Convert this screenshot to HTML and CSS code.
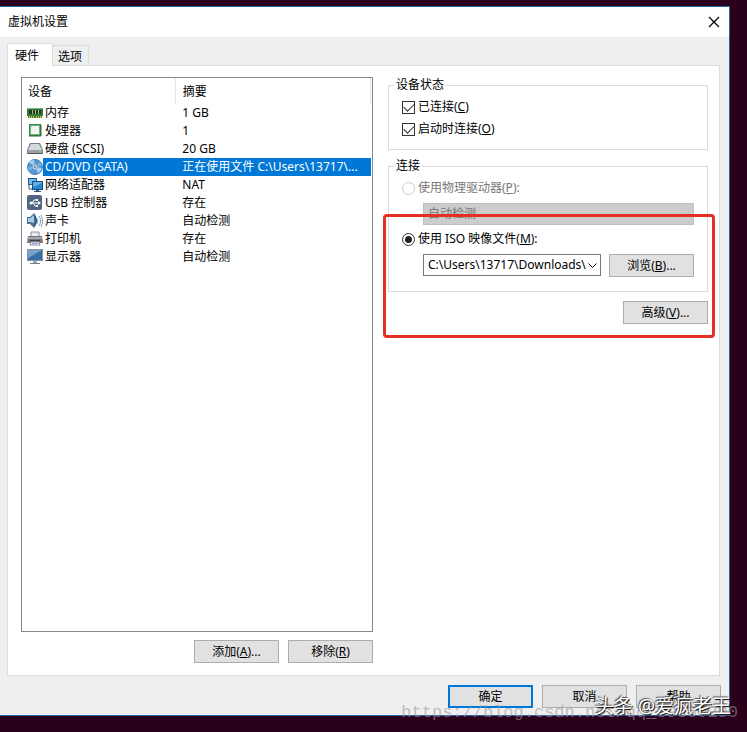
FILE: index.html
```html
<!DOCTYPE html>
<html lang="zh-CN">

<head>
    <meta charset="UTF-8">
    <meta name="viewport" content="width=device-width, initial-scale=1.0">
    <title>虚拟机设置</title>
    <link rel="stylesheet" href="styles.css">
</head>

<body>
    <main class="dialog">
        <header class="titlebar">
            <h1>虚拟机设置</h1>
            <button class="close" type="button" aria-label="关闭">
                <svg width="12" height="12" viewBox="0 0 12 12"><path d="M1 1l10 10M11 1L1 11" stroke="#000" stroke-width="1.2" fill="none"/></svg>
            </button>
        </header>

        <nav class="tabs">
            <button class="tab active" type="button">硬件</button>
            <button class="tab" type="button">选项</button>
        </nav>

        <div class="panel">
            <section class="hardware">
                <div class="list">
                    <table>
                        <thead>
                            <tr><th class="name">设备</th><th>摘要</th></tr>
                        </thead>
                        <tbody>
                            <tr>
                                <td><div class="device">
                                    <svg viewBox="0 0 16 16"><path d="M0 3h16v8h-1v2H1v-2H0z" fill="#2f7d3c"/><path d="M0 3h16v1H0z" fill="#7db183"/><path d="M2 5h3v4H2zM6 5h2v4H6zM9 5h2v4H9zM12 5h2v4h-2z" fill="#23372a"/><path d="M5 5h1v4H5zM8 5h1v4H8zM11 5h1v4h-1z" fill="#a9c65b"/><path d="M2 11h1v2H2zM4 11h1v2H4zM6 11h1v2H6zM9 11h1v2H9zM11 11h1v2h-1zM13 11h1v2h-1z" fill="#e1bd45"/></svg>
                                    <span>内存</span></div></td>
                                <td>1 GB</td>
                            </tr>
                            <tr>
                                <td><div class="device">
                                    <svg viewBox="0 0 16 16"><path d="M2 1h12v12H2z" fill="#2f8b48"/><path d="M3 2h10v10H3z" fill="#73b184"/><path d="M5 3h7v8H4V4z" fill="#f1f5f0"/><path d="M2 13h12V2" stroke="#246b37" fill="none"/></svg>
                                    <span>处理器</span></div></td>
                                <td>1</td>
                            </tr>
                            <tr>
                                <td><div class="device">
                                    <svg viewBox="0 0 16 16"><path d="M3 2h10l3 7v4H0V9z" fill="#777d86"/><path d="M4 3h8l3 6H1z" fill="#d5d8df"/><path d="M1 9h14v3H1z" fill="#9ba0a9"/><path d="M1 12h14v1H1z" fill="#50555b"/><path d="M12 10h2v1h-2z" fill="#77df57"/></svg>
                                    <span>硬盘 (SCSI)</span></div></td>
                                <td>20 GB</td>
                            </tr>
                            <tr class="selected">
                                <td><div class="device">
                                    <svg viewBox="0 0 16 16"><circle cx="8" cy="8" r="7.5" fill="#5795ce" stroke="#3f7fba"/><path d="M8 8L2 3a8 8 0 0 1 5-2zM8 8l7 1a7 7 0 0 1-4 5z" fill="#a8d1ef"/><path d="M8 8l5-5 2 4zM8 8l-6 4-1-4z" fill="#76b3df"/><circle cx="8" cy="8" r="2.5" fill="#d9eaf7" stroke="#6a9fca"/><circle cx="8" cy="8" r="1" fill="#477b9f"/></svg>
                                    <span>CD/DVD (SATA)</span></div></td>
                                <td>正在使用文件 C:\Users\13717\...</td>
                            </tr>
                            <tr>
                                <td><div class="device">
                                    <svg viewBox="0 0 16 16"><path d="M1 1h9v7H1z" fill="#1b598f"/><path d="M2 2h7v5H2z" fill="#7db9e7"/><path d="M5 4h11v9H5z" fill="#0c4f89"/><path d="M6 5h9v7H6z" fill="#65afe5"/><path d="M6 10l9-4v6H6z" fill="#2887c9"/><path d="M9 13h3v1h2v1H7v-1h2z" fill="#345b78"/><path d="M2 8v4h3" fill="none" stroke="#345b78"/></svg>
                                    <span>网络适配器</span></div></td>
                                <td>NAT</td>
                            </tr>
                            <tr>
                                <td><div class="device">
                                    <svg viewBox="0 0 16 16"><rect x="0" y="0" width="15" height="15" rx="2" fill="#51677f"/><path d="M3 8h9M5 8l2-3h3M6 8l2 3h2" stroke="#fff" fill="none"/><path d="M11 6l3 2-3 2zM9 4h2v2H9zM9 10h2v2H9z" fill="#fff"/><circle cx="4" cy="8" r="1.5" fill="#fff"/></svg>
                                    <span>USB 控制器</span></div></td>
                                <td>存在</td>
                            </tr>
                            <tr>
                                <td><div class="device">
                                    <svg viewBox="0 0 16 16"><path d="M0 4h3l4-4c3 3 3 12 0 15l-4-4H0C-1 9-1 6 0 4z" fill="#4a789b"/><path d="M1 5h3l3-4v9L4 9H1z" fill="#a8cce1"/><path d="M7 2c3 3 3 8 0 11" stroke="#214f75" stroke-width="1.5" fill="none"/><path d="M10 5c1 2 1 4 0 6M12 3c2 3 2 7 0 10M14 2c2 4 2 8 0 12" stroke="#739ebd" fill="none"/></svg>
                                    <span>声卡</span></div></td>
                                <td>自动检测</td>
                            </tr>
                            <tr>
                                <td><div class="device">
                                    <svg viewBox="0 0 16 16"><path d="M4 1h8v6H4z" fill="#e9edf3" stroke="#8c8b97"/><path d="M1 5h14l1 7H0z" fill="#77727f"/><path d="M1 6h14v2H1z" fill="#aaa6b0"/><path d="M3 9h10v1H3z" fill="#3e3b43"/><path d="M4 11h8l1 3H3z" fill="#f5f8ff" stroke="#8d8aa0"/><path d="M5 12h6v1H5z" fill="#9aa9d6"/></svg>
                                    <span>打印机</span></div></td>
                                <td>存在</td>
                            </tr>
                            <tr>
                                <td><div class="device">
                                    <svg viewBox="0 0 16 16"><path d="M0 0h16v12H0z" fill="#8796a5"/><path d="M1 1h14v10H1z" fill="#3b6ea2"/><path d="M1 1h14L1 9z" fill="#78a1c8"/><path d="M6 12h4v2H6z" fill="#9eabb6"/><path d="M3 14h10v1H3z" fill="#71818f"/></svg>
                                    <span>显示器</span></div></td>
                                <td>自动检测</td>
                            </tr>
                        </tbody>
                    </table>
                </div>
                <div class="actions">
                    <button class="btn" type="button">添加(<u>A</u>)...</button>
                    <button class="btn" type="button">移除(<u>R</u>)</button>
                </div>
            </section>

            <form class="settings">
                <fieldset>
                    <legend>设备状态</legend>
                    <label class="option"><input type="checkbox" checked><span>已连接(<u>C</u>)</span></label>
                    <label class="option"><input type="checkbox" checked><span>启动时连接(<u>O</u>)</span></label>
                </fieldset>
                <fieldset class="connection">
                    <legend>连接</legend>
                    <label class="option disabled"><input type="radio" name="source" disabled><span>使用物理驱动器(<u>P</u>):</span></label>
                    <div class="source">
                        <div class="combo disabled">
                            <select aria-label="物理驱动器" disabled><option>自动检测</option></select>
                            <svg width="9" height="6" viewBox="0 0 9 6"><path d="M.5 .5l4 4 4-4" stroke="currentColor" fill="none"/></svg>
                        </div>
                    </div>
                    <label class="option"><input type="radio" name="source" checked><span>使用 ISO 映像文件(<u>M</u>):</span></label>
                    <div class="source">
                        <div class="combo">
                            <select aria-label="ISO 映像文件"><option>C:\Users\13717\Downloads\</option></select>
                            <svg width="9" height="6" viewBox="0 0 9 6"><path d="M.5 .5l4 4 4-4" stroke="currentColor" fill="none"/></svg>
                        </div>
                        <button class="btn" type="button">浏览(<u>B</u>)...</button>
                    </div>
                </fieldset>
                <div class="actions">
                    <button class="btn" type="button">高级(<u>V</u>)...</button>
                </div>
                <div class="highlight"></div>
            </form>
        </div>

        <footer class="actions">
            <button class="btn default" type="button">确定</button>
            <button class="btn" type="button">取消</button>
            <button class="btn" type="button">帮助</button>
        </footer>
    </main>

    <div class="watermark url">https://blog.csdn.net/qq_39380290</div>
    <div class="watermark author">头条 @爱疯老王</div>
</body>

</html>
```
FILE: styles.css
```css
:root {
    --face: #efefef;
    --line: #dcdcdc;
    --accent: #0078d7;
}
* {
    box-sizing: border-box;
}
body {
    position: relative;
    min-height: 100vh;
    margin: 0;
    padding: 6px 17px 16px 0;
    background: #2b001b;
    color: #000;
    font: 12px/16px "Noto Sans", "Noto Sans CJK SC", sans-serif;
}
button,
select,
input {
    margin: 0;
    font: inherit;
    color: inherit;
}
.dialog {
    display: flex;
    flex-direction: column;
    min-height: calc(100vh - 22px);
    background: var(--face);
    border: 1px solid #2a62a8;
    border-left: 0;
}
.titlebar {
    display: flex;
    justify-content: space-between;
    align-items: center;
    height: 30px;
    padding: 0 9px 0 8px;
    background: #fff;
}
.titlebar h1 {
    margin: 0;
    font-size: 12px;
    font-weight: 400;
}
.close {
    display: flex;
    padding: 0;
    border: 0;
    background: none;
}

/* tabs */
.tabs {
    display: flex;
    align-items: flex-end;
    padding: 6px 7px 0;
}
.tab {
    height: 20px;
    padding: 2px 6px 0 5px;
    border: 1px solid var(--line);
    border-left: 0;
    border-bottom: 0;
    background: var(--face);
}
.tab.active {
    position: relative;
    height: 23px;
    margin-bottom: -1px;
    padding: 1px 13px 0 7px;
    border-left: 1px solid var(--line);
    background: #fff;
}

.panel {
    flex: 1;
    display: grid;
    grid-template-columns: 11fr 10fr;
    gap: 15px;
    margin: 0 9px 0 7px;
    padding: 11px 11px 12px 13px;
    border: 1px solid var(--line);
    background: #fff;
}

/* device list */
.hardware {
    display: flex;
    flex-direction: column;
    gap: 8px;
}
.list {
    flex: 1;
    padding-right: 1px;
    border: 1px solid #828790;
}
table {
    width: 100%;
    table-layout: fixed;
    border-collapse: collapse;
}
th {
    height: 26px;
    padding: 2px 6px 0;
    border-right: 1px solid #e5e5e5;
    font-weight: 400;
    text-align: left;
}
th.name {
    width: 44%;
}
td {
    height: 18px;
    padding: 0 0 0 7px;
    white-space: nowrap;
}
th:last-child {
    padding-left: 7px;
}
td:first-child {
    padding-left: 5px;
}
.device {
    display: flex;
    align-items: center;
}
.device svg {
    flex: none;
    width: 16px;
    height: 16px;
}
.device span {
    flex: 1;
    padding-left: 2px;
    line-height: 18px;
}
.selected span,
.selected td:last-child {
    background: var(--accent);
    color: #fff;
}

/* buttons */
.actions {
    display: flex;
    justify-content: flex-end;
    gap: 9px;
}
footer.actions {
    padding: 9px 8px 7px;
}
.btn {
    flex: none;
    width: 85px;
    height: 23px;
    padding: 0;
    border: 1px solid #adadad;
    background: #e1e1e1;
}
.btn.default {
    border: 2px solid var(--accent);
}

/* settings */
.settings {
    position: relative;
}
fieldset {
    min-width: 0;
    margin: 0 0 8px;
    padding: 3px 13px 9px;
    border: 1px solid var(--line);
}
legend {
    margin-left: -8px;
    padding: 0 2px;
}
.option {
    display: flex;
    align-items: center;
    gap: 3px;
    height: 22px;
}
.option input {
    appearance: none;
    display: grid;
    place-items: center;
    width: 13px;
    height: 13px;
    border: 1px solid #333;
    background: #fff;
}
.option input[type="radio"] {
    border-radius: 50%;
}
.option input[type="checkbox"]:checked::before {
    content: "";
    width: 9px;
    height: 5px;
    margin-top: -3px;
    border: solid #333;
    border-width: 0 0 1px 1px;
    transform: rotate(-45deg);
}
.option input[type="radio"]:checked::before {
    content: "";
    width: 7px;
    height: 7px;
    border-radius: 50%;
    background: #222;
}
.option.disabled {
    color: #777;
}
.option input:disabled {
    border-color: #ccc;
}
.connection {
    margin-bottom: 9px;
    padding-bottom: 14px;
}
.source {
    display: flex;
    gap: 8px;
    margin: 4px 0 3px 21px;
}
.source:last-child {
    margin-bottom: 0;
}
.combo {
    position: relative;
    flex: 1;
    min-width: 0;
}
.combo select {
    appearance: none;
    display: block;
    width: 100%;
    height: 22px;
    padding: 0 14px 0 4px;
    border: 1px solid #777;
    border-radius: 0;
    background: #fff;
}
.combo svg {
    position: absolute;
    top: 9px;
    right: 4px;
    pointer-events: none;
}
.combo.disabled {
    color: #777;
}
.combo.disabled select {
    border-color: #bfbfbf;
    background: #ccc;
    opacity: 1;
}
.combo.disabled svg {
    color: #b5b5b5;
}
.highlight {
    position: absolute;
    top: 137px;
    left: -5px;
    right: -7px;
    height: 124px;
    border: 3px solid #e52e25;
    border-radius: 4px;
    pointer-events: none;
}

/* watermarks */
.watermark {
    position: absolute;
    white-space: nowrap;
    pointer-events: none;
}
.url {
    right: 9px;
    bottom: 7px;
    color: rgba(160, 150, 160, 0.6);
    font: 17px/24px "Liberation Mono", monospace;
}
.author {
    right: 16px;
    bottom: 13px;
    color: #fff;
    font-size: 19px;
    line-height: 26px;
    text-shadow: 1px 1px 1px #000, -1px -1px 1px #555;
}
```
